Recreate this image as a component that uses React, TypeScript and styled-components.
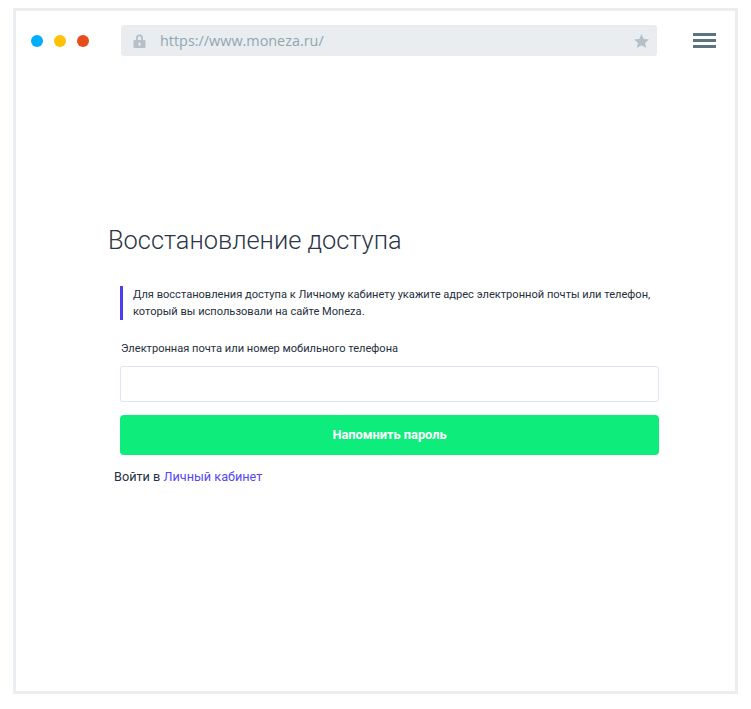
import React from "react";
import styled, { createGlobalStyle } from "styled-components";

const Global = createGlobalStyle`
  html, body { margin: 0; padding: 0; background: #fff; }
  body { font-family: Roboto, "Liberation Sans", sans-serif; }
`;

const Page = styled.div`
  width: 751px;
  height: 709px;
  padding: 8px 13px 15px;
  box-sizing: border-box;
`;

const Frame = styled.div`
  width: 725px;
  height: 686px;
  box-sizing: border-box;
  border: 3px solid #ebeef1;
  display: flex;
  flex-direction: column;
`;

const Toolbar = styled.div`
  display: flex;
  align-items: center;
  height: 31px;
  margin-top: 14px;
  padding-left: 15px;
`;

const Dots = styled.div`
  display: flex;
  gap: 11px;
  width: 90px;
`;

const Dot = styled.span<{ $color: string }>`
  width: 12px;
  height: 12px;
  border-radius: 50%;
  background: ${(p) => p.$color};
`;

const UrlBar = styled.div`
  width: 536px;
  height: 31px;
  background: #e9edf0;
  border-radius: 3px;
  display: flex;
  align-items: center;
  padding: 0 8px 0 12px;
  box-sizing: border-box;
  color: #b5c0c9;
`;

const UrlText = styled.span`
  font-family: "Open Sans", sans-serif;
  font-size: 14.4px;
  color: #93a5b1;
  margin-left: 14px;
  flex: 1;
`;

const Burger = styled.div`
  margin-left: 36px;
  width: 23px;
  display: flex;
  flex-direction: column;
  gap: 3px;
`;

const BurgerLine = styled.span`
  height: 3px;
  background: #5b7383;
`;

const Content = styled.div`
  display: flex;
  flex-direction: column;
  padding: 0 76px 0 92px;
  margin-top: 167px;
`;

const Title = styled.h1`
  margin: 0;
  font-weight: 300;
  font-size: 25.4px;
  line-height: 34px;
  color: #2b3648;
`;

const Note = styled.p`
  margin: 29px 0 0 12px;
  padding: 0 0 0 10px;
  border-left: 3px solid #4d3ff0;
  font-size: 11.08px;
  line-height: 17px;
  color: #262f40;
`;

const FieldLabel = styled.label`
  display: block;
  margin: 20px 0 0 13px;
  font-size: 11.08px;
  line-height: 17px;
  color: #262f40;
`;

const Input = styled.input`
  display: block;
  margin: 9px 0 0 12px;
  width: 539px;
  height: 36px;
  box-sizing: border-box;
  border: 1px solid #dfe3f6;
  border-radius: 3px;
  background: #fff;
  outline: none;
`;

const Submit = styled.button`
  margin: 13px 0 0 12px;
  width: 539px;
  height: 40px;
  padding: 0 0 2px;
  border: none;
  border-radius: 4px;
  background: #0eec7c;
  color: #fff;
  font-family: Roboto, sans-serif;
  font-weight: 700;
  font-size: 12.8px;
`;

const LoginLine = styled.div`
  margin: 13px 0 0 6px;
  font-size: 12.7px;
  line-height: 18px;
  color: #262f40;
`;

const Link = styled.a`
  color: #5548f2;
  text-decoration: none;
`;

const LockIcon = () => (
  <svg width="13" height="14" viewBox="0 0 13 14" fill="currentColor">
    <path d="M3 6V4a3.5 3.5 0 0 1 7 0v2h1.5a1 1 0 0 1 1 1v6a1 1 0 0 1-1 1h-10a1 1 0 0 1-1-1V7a1 1 0 0 1 1-1H3zm1.8 0h3.4V4a1.7 1.7 0 0 0-3.4 0v2zm1.7 2.6a1.3 1.3 0 0 0-.6 2.4v1h1.2v-1a1.3 1.3 0 0 0-.6-2.4z" fillRule="evenodd" />
  </svg>
);

const StarIcon = () => (
  <svg width="15" height="14" viewBox="0 0 15 14" fill="currentColor">
    <path d="M7.5 0l2.2 4.9 5.3.5-4 3.5 1.2 5.1-4.7-2.7-4.7 2.7 1.2-5.1-4-3.5 5.3-.5z" />
  </svg>
);

export default function App() {
  return (
    <Page>
      <Global />
      <Frame>
        <Toolbar>
          <Dots>
            <Dot $color="#00aeff" />
            <Dot $color="#ffc107" />
            <Dot $color="#e74c1b" />
          </Dots>
          <UrlBar>
            <LockIcon />
            <UrlText>https://www.moneza.ru/</UrlText>
            <StarIcon />
          </UrlBar>
          <Burger>
            <BurgerLine />
            <BurgerLine />
            <BurgerLine />
          </Burger>
        </Toolbar>
        <Content>
          <Title>Восстановление доступа</Title>
          <Note>
            Для восстановления доступа к Личному кабинету укажите адрес электронной почты или телефон,
            <br />
            который вы использовали на сайте Moneza.
          </Note>
          <FieldLabel>Электронная почта или номер мобильного телефона</FieldLabel>
          <Input />
          <Submit>Напомнить пароль</Submit>
          <LoginLine>
            Войти в <Link>Личный кабинет</Link>
          </LoginLine>
        </Content>
      </Frame>
    </Page>
  );
}
